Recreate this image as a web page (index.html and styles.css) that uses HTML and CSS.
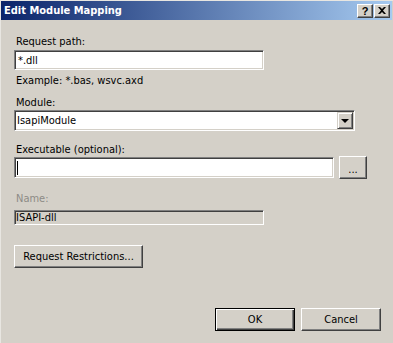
FILE: index.html
```html
<!DOCTYPE html>
<html lang="en">
<head>
    <meta charset="UTF-8">
    <meta name="viewport" content="width=device-width, initial-scale=1.0">
    <title>Edit Module Mapping</title>
    <link rel="stylesheet" href="styles.css">
</head>
<body>
    <div class="window">
        <div class="titlebar">
            <span class="title">Edit Module Mapping</span>
            <div class="caption-buttons">
                <div class="cap-btn help">?</div>
                <div class="cap-btn close">
                    <svg width="8" height="7" viewBox="0 0 8 7"><path d="M0 0h2l2 2 2-2h2L5 3.5 8 7H6L4 5 2 7H0l3-3.5z" fill="#000"/></svg>
                </div>
            </div>
        </div>

        <div class="content">
            <div class="label first">Request path:</div>
            <div class="field path">*.dll</div>
            <div class="hint">Example: *.bas, wsvc.axd</div>

            <div class="label module-label">Module:</div>
            <div class="field select">
                <span>IsapiModule</span>
                <div class="drop-btn"><span class="arrow"></span></div>
            </div>

            <div class="label exe-label">Executable (optional):</div>
            <div class="exe-row">
                <div class="field exe"><span class="caret"></span></div>
                <div class="btn browse">...</div>
            </div>

            <div class="label disabled name-label">Name:</div>
            <div class="field readonly">ISAPI-dll</div>

            <div class="btn restrictions">Request Restrictions...</div>

            <div class="footer">
                <div class="btn default">OK</div>
                <div class="btn">Cancel</div>
            </div>
        </div>
    </div>
</body>
</html>
```

FILE: styles.css
```css
body {
    margin: 0;
    padding: 0;
    background-color: #d4d0c8;
    font-family: "DejaVu Sans Condensed", "DejaVu Sans", sans-serif;
    font-size: 11px;
    color: #000;
}
.window {
    width: 393px;
    height: 343px;
    box-sizing: border-box;
    border-top: 1px solid #e8e6e1;
    border-left: 1px solid #e8e6e1;
    background-color: #d4d0c8;
}
.titlebar {
    height: 19px;
    margin-right: 1px;
    background: linear-gradient(to right, #0a246a, #a6caf0);
    display: flex;
    align-items: center;
    justify-content: space-between;
}
.title {
    color: #fff;
    font-weight: bold;
    padding-left: 3px;
    line-height: 13px;
}
.caption-buttons {
    display: flex;
    gap: 1px;
    padding-right: 2px;
}
.cap-btn {
    width: 16px;
    height: 14px;
    box-sizing: border-box;
    background-color: #d4d0c8;
    border: 1px solid;
    border-color: #fff #404040 #404040 #fff;
    box-shadow: inset -1px -1px #808080;
    display: flex;
    align-items: center;
    justify-content: center;
}
.help {
    font-family: "Liberation Sans", sans-serif;
    font-weight: bold;
    font-size: 11px;
    line-height: 12px;
}
.content {
    padding-left: 13px;
    padding-right: 12px;
    display: flex;
    flex-direction: column;
    align-items: flex-start;
}
.label {
    line-height: 13px;
    padding-left: 2px;
}
.label.first {
    margin-top: 15px;
}
.label.disabled {
    color: #8d8b86;
}
.field {
    box-sizing: border-box;
    background-color: #fff;
    border: 1px solid;
    border-color: #808080 #fff #fff #808080;
    box-shadow: inset 1px 1px #404040, inset -1px -1px #d4d0c8;
    padding-left: 3px;
    display: flex;
    align-items: center;
}
.path {
    margin-top: 2px;
    width: 250px;
    height: 20px;
}
.hint {
    margin-top: 4px;
    line-height: 13px;
    padding-left: 2px;
}
.module-label {
    margin-top: 9px;
}
.select {
    margin-top: 1px;
    width: 341px;
    height: 21px;
    padding-left: 2px;
    justify-content: space-between;
}
.drop-btn {
    width: 16px;
    height: 17px;
    box-sizing: border-box;
    margin-right: 1px;
    background-color: #d4d0c8;
    border: 1px solid;
    border-color: #d4d0c8 #404040 #404040 #d4d0c8;
    box-shadow: inset 1px 1px #fff, inset -1px -1px #808080;
    display: flex;
    align-items: center;
    justify-content: center;
}
.arrow {
    width: 0;
    height: 0;
    border-left: 4px solid transparent;
    border-right: 4px solid transparent;
    border-top: 4px solid #000;
}
.exe-label {
    margin-top: 12px;
}
.exe-row {
    display: flex;
    align-items: center;
    gap: 5px;
}
.exe {
    width: 320px;
    height: 21px;
}
.caret {
    width: 1px;
    height: 14px;
    background-color: #000;
    margin-left: -1px;
}
.btn {
    box-sizing: border-box;
    background-color: #d4d0c8;
    border: 1px solid;
    border-color: #fff #404040 #404040 #fff;
    box-shadow: inset -1px -1px #808080;
    display: flex;
    align-items: center;
    justify-content: center;
    line-height: 13px;
}
.browse {
    width: 28px;
    height: 23px;
    padding-top: 3px;
}
.name-label {
    margin-top: 13px;
}
.readonly {
    margin-top: 5px;
    width: 250px;
    height: 15px;
    background-color: #d4d0c8;
    padding-left: 1px;
}
.restrictions {
    margin-top: 20px;
    width: 129px;
    height: 23px;
}
.footer {
    margin-top: 40px;
    align-self: stretch;
    display: flex;
    justify-content: flex-end;
    gap: 6px;
}
.footer .btn {
    width: 80px;
    height: 23px;
}
.btn.default {
    border: 1px solid #000;
    box-shadow: inset 1px 1px #fff, inset -1px -1px #404040, inset -2px -2px #808080;
}
```
